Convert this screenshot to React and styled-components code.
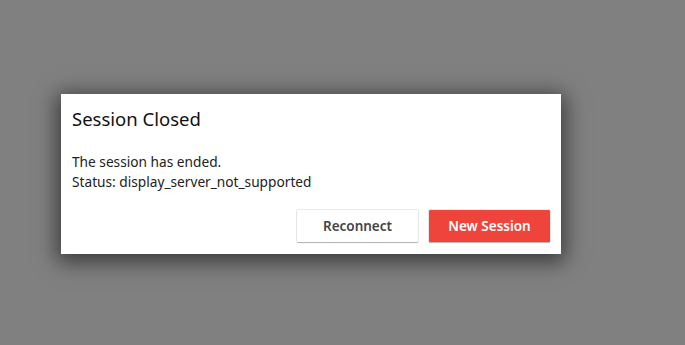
import React from "react";
import styled, { createGlobalStyle } from "styled-components";

const GlobalStyle = createGlobalStyle`
  html, body {
    margin: 0;
    padding: 0;
    height: 100%;
    background: #808080;
  }
  #root {
    height: 100%;
  }
`;

const Overlay = styled.div`
  width: 100%;
  height: 100%;
  background: #808080;
  padding: 94px 0 0 61px;
  box-sizing: border-box;
  font-family: "Noto Sans", "Open Sans", sans-serif;
`;

const Dialog = styled.div`
  width: 500px;
  height: 160px;
  box-sizing: border-box;
  background: #ffffff;
  padding: 11px 11px 12px 11px;
  box-shadow: 0 4px 20px 4px rgba(0, 0, 0, 0.55);
  display: flex;
  flex-direction: column;
`;

const Title = styled.h2`
  margin: 0;
  font-size: 18.5px;
  font-weight: 400;
  line-height: 28px;
  color: #111;
`;

const Message = styled.div`
  margin-top: 19px;
  font-size: 13.7px;
  line-height: 20px;
  color: #222;
`;

const Actions = styled.div`
  margin-top: auto;
  display: flex;
  justify-content: flex-end;
  gap: 11px;
`;

const Button = styled.button`
  width: 121px;
  height: 32px;
  border: none;
  border-radius: 1px;
  font-family: inherit;
  font-size: 13.5px;
  font-weight: 600;
  cursor: pointer;
  background: ${(p) => (p.$primary ? "#ef443c" : "#ffffff")};
  color: ${(p) => (p.$primary ? "#ffffff" : "#444444")};
  box-shadow: 0 1px 1px rgba(0, 0, 0, 0.25), 0 0 0 1px rgba(0, 0, 0, 0.08);
`;

const App = () => {
  return (
    <>
      <GlobalStyle />
      <Overlay>
        <Dialog>
          <Title>Session Closed</Title>
          <Message>
            The session has ended.
            <br />
            Status: display_server_not_supported
          </Message>
          <Actions>
            <Button>Reconnect</Button>
            <Button $primary>New Session</Button>
          </Actions>
        </Dialog>
      </Overlay>
    </>
  );
};

export default App;
